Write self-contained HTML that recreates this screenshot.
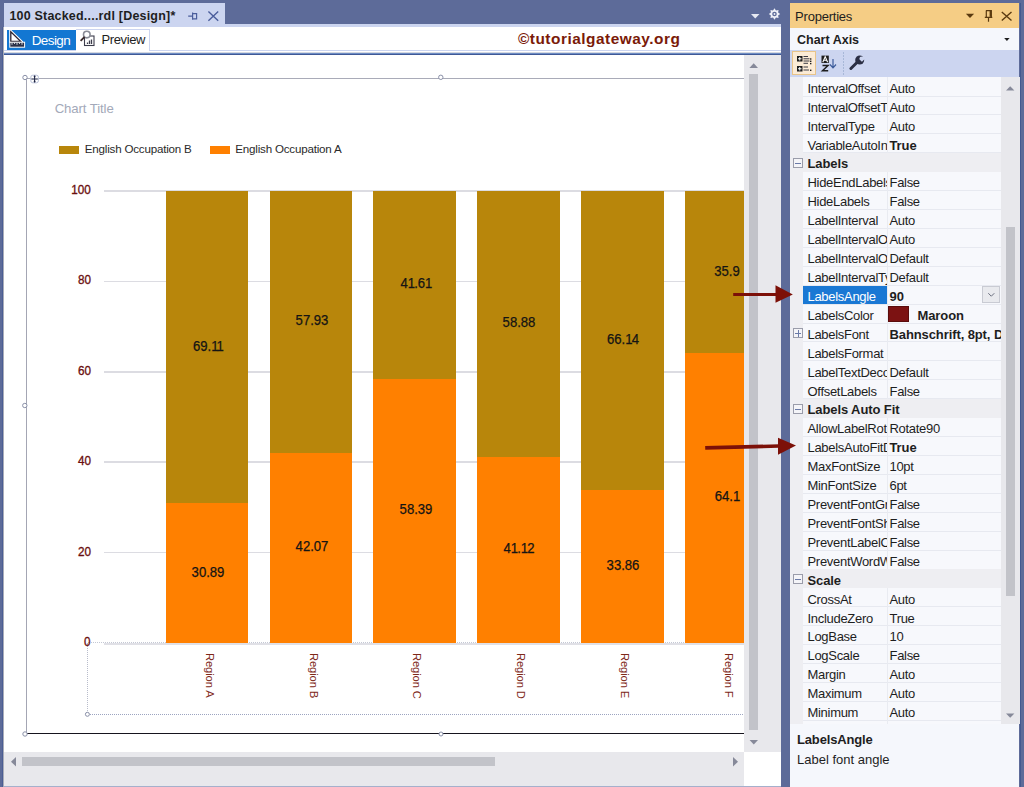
<!DOCTYPE html>
<html><head><meta charset="utf-8">
<style>
html,body{margin:0;padding:0;}
body{width:1024px;height:787px;overflow:hidden;background:#5d6b99;position:relative;font-family:"Liberation Sans",sans-serif;}
.a{position:absolute;}
.t{position:absolute;white-space:nowrap;line-height:0;}
svg{position:absolute;overflow:visible;}
</style></head><body>

<div class="a" style="left:4px;top:3px;width:221px;height:24px;background:#ccd5f0;"></div>
<div class="t" style="left:9.4px;top:15.97px;font-size:12.5px;color:#1e1e1e;font-weight:700;letter-spacing:0.2px;">100 Stacked....rdl [Design]*</div>
<svg style="left:0;top:0" width="1" height="1"><g fill="none" stroke="#4b5e9c" stroke-width="1.2"><path d="M188.2 16.2H192.5M192.6 12.6V19.7M192.6 13.6H196.6V18.8H192.6"/><path d="M208.4 11.6L218.2 20.8M218.2 11.6L208.4 20.8" stroke-width="1.4"/></g></svg>
<div class="a" style="left:4px;top:24px;width:777px;height:3px;background:#ccd5f0;"></div>
<div class="a" style="left:4px;top:27px;width:777px;height:23px;background:#ffffff;"></div>
<div class="a" style="left:4px;top:50px;width:777px;height:1px;background:#ccd5f0;"></div>
<div class="a" style="left:4px;top:51px;width:777px;height:1px;background:#ffffff;"></div>
<div class="a" style="left:4px;top:52px;width:777px;height:1px;background:#d5d8e0;"></div>
<div class="a" style="left:4px;top:53px;width:777px;height:1px;background:#6d8cc4;"></div>
<div class="a" style="left:4px;top:54px;width:777px;height:1px;background:#3f5996;"></div>
<svg style="left:0;top:0" width="1" height="1"><path d="M751 14H759.5L755.25 18.5Z" fill="#e6e9f3"/><path d="M774.50 8.30L775.99 10.40L778.53 9.97L778.10 12.51L780.20 14.00L778.10 15.49L778.53 18.03L775.99 17.60L774.50 19.70L773.01 17.60L770.47 18.03L770.90 15.49L768.80 14.00L770.90 12.51L770.47 9.97L773.01 10.40Z" fill="#eef0f8"/><circle cx="774.5" cy="14" r="2.3" fill="#5d6b99"/><circle cx="774.5" cy="14" r="0.9" fill="#eef0f8"/></svg>
<div class="a" style="left:6.5px;top:29.7px;width:69.6px;height:20.5px;background:#1377d2;"></div>
<svg style="left:0;top:0" width="1" height="1"><path d="M10.3 30.6V41.9H21.9Z" fill="#ffffff" stroke="#ffffff" stroke-width="2.2" stroke-linejoin="round"/><path d="M10.8 31.8V41.4H20.6Z" fill="#ffffff" stroke="#2a2230" stroke-width="1.3" stroke-linejoin="miter"/><rect x="9.8" y="42.2" width="14.8" height="5" fill="#2a3048" stroke="#fff" stroke-width="1"/><path d="M12 42.7V44.8M14.5 42.7V44M17 42.7V44.8M19.5 42.7V44M22 42.7V44.8" stroke="#fff" stroke-width="0.8"/></svg>
<div class="t" style="left:31.7px;top:40.52px;font-size:13.5px;color:#ffffff;font-weight:400;letter-spacing:-0.6px;">Design</div>
<div class="a" style="left:76px;top:29px;width:74px;height:22px;border:1px solid #ccd5f0;border-left:none;border-bottom:none;box-sizing:border-box;background:#fff"></div>
<svg style="left:0;top:0" width="1" height="1"><rect x="84.5" y="36" width="9.5" height="9.5" fill="#fff" stroke="#3c3c4c" stroke-width="1.1"/><path d="M87.5 44V42.5M89.5 44V40.5M91.5 44V39.5" stroke="#3c3c4c" stroke-width="1.3"/><circle cx="86.8" cy="34.6" r="3.3" fill="#fff" stroke="#8a8c96" stroke-width="1.6"/><path d="M84.6 36.9L80.6 40.9" stroke="#3a2a2a" stroke-width="1.8"/></svg>
<div class="t" style="left:101.4px;top:40.29px;font-size:13px;color:#1e1e1e;font-weight:400;letter-spacing:-0.37px;">Preview</div>
<div class="t" style="left:517.9px;top:38.56px;font-size:15.4px;color:#7a1a08;font-weight:700;letter-spacing:0.52px;">&copy;tutorialgateway.org</div>
<div class="a" style="left:4px;top:55px;width:740px;height:697px;background:#fff;overflow:hidden"><div class="a" style="left:-4px;top:-55px;width:1024px;height:787px">
<div class="a" style="left:26px;top:78px;width:740px;height:1px;background:#a9abb8;"></div>
<div class="a" style="left:25.8px;top:78px;width:1.5px;height:656px;background:#a4a6b4;"></div>
<div class="a" style="left:26px;top:732.7px;width:740px;height:1.5px;background:#16141e;"></div>
<div class="t" style="left:54.7px;top:108.82px;font-size:13.2px;color:#a3a9b9;font-weight:400;letter-spacing:-0.1px;">Chart Title</div>
<div class="a" style="left:59px;top:146px;width:20px;height:8px;background:#b8860b;"></div>
<div class="t" style="left:84.8px;top:148.78px;font-size:11.6px;color:#2a2a2a;font-weight:400;letter-spacing:-0.2px;">English Occupation B</div>
<div class="a" style="left:210px;top:146px;width:20px;height:8px;background:#ff8000;"></div>
<div class="t" style="left:235.3px;top:148.78px;font-size:11.6px;color:#2a2a2a;font-weight:400;letter-spacing:-0.2px;">English Occupation A</div>
<div class="a" style="left:104px;top:190.3px;width:640px;height:1.5px;background:#dcdce2;"></div>
<div class="t" style="right:933px;top:190.08px;font-size:13.6px;color:#6a0e0e;font-weight:400;transform:scaleX(0.86);transform-origin:right center;-webkit-text-stroke:0.35px #6a0e0e;">100</div>
<div class="a" style="left:104px;top:280.68px;width:640px;height:1.5px;background:#dcdce2;"></div>
<div class="t" style="right:933px;top:280.46px;font-size:13.6px;color:#6a0e0e;font-weight:400;transform:scaleX(0.86);transform-origin:right center;-webkit-text-stroke:0.35px #6a0e0e;">80</div>
<div class="a" style="left:104px;top:371.06px;width:640px;height:1.5px;background:#dcdce2;"></div>
<div class="t" style="right:933px;top:370.84px;font-size:13.6px;color:#6a0e0e;font-weight:400;transform:scaleX(0.86);transform-origin:right center;-webkit-text-stroke:0.35px #6a0e0e;">60</div>
<div class="a" style="left:104px;top:461.44px;width:640px;height:1.5px;background:#dcdce2;"></div>
<div class="t" style="right:933px;top:461.22px;font-size:13.6px;color:#6a0e0e;font-weight:400;transform:scaleX(0.86);transform-origin:right center;-webkit-text-stroke:0.35px #6a0e0e;">40</div>
<div class="a" style="left:104px;top:551.82px;width:640px;height:1.5px;background:#dcdce2;"></div>
<div class="t" style="right:933px;top:551.60px;font-size:13.6px;color:#6a0e0e;font-weight:400;transform:scaleX(0.86);transform-origin:right center;-webkit-text-stroke:0.35px #6a0e0e;">20</div>
<div class="a" style="left:104px;top:643.0px;width:640px;height:1.5px;background:#e0e0e6;"></div>
<div class="a" style="left:88px;top:641.70px;width:656px;height:0;border-top:1px dotted #c4c8d4"></div>
<div class="a" style="left:87px;top:643px;width:660px;height:72px;border-left:1px dotted #b8bccb;border-bottom:1px dotted #9ca4c0;box-sizing:border-box"></div>
<div class="a" style="left:165.8px;top:190.8px;width:82.5px;height:312.31px;background:#b8860b;"></div>
<div class="a" style="left:165.8px;top:503.11px;width:82.5px;height:139.59px;background:#ff8000;"></div>
<div class="t" style="left:8.0px;width:400px;text-align:center;top:346.57px;font-size:13.8px;color:#141414;font-weight:400;transform:scaleX(0.95);-webkit-text-stroke:0.25px #141414;">69.<span style="letter-spacing:-0.9px">1</span><span style="letter-spacing:-0.9px">1</span></div>
<div class="t" style="left:8.0px;width:400px;text-align:center;top:572.52px;font-size:13.8px;color:#141414;font-weight:400;transform:scaleX(0.95);-webkit-text-stroke:0.25px #141414;">30.89</div>
<div class="a" style="left:201.80px;top:653px;width:16px;height:60px;writing-mode:vertical-rl;font-size:11.2px;line-height:16px;color:#7e2818;white-space:nowrap;letter-spacing:-0.1px">Region A</div>
<div class="a" style="left:269.6px;top:190.8px;width:82.5px;height:261.79px;background:#b8860b;"></div>
<div class="a" style="left:269.6px;top:452.59px;width:82.5px;height:190.11px;background:#ff8000;"></div>
<div class="t" style="left:111.80000000000001px;width:400px;text-align:center;top:321.31px;font-size:13.8px;color:#141414;font-weight:400;transform:scaleX(0.95);-webkit-text-stroke:0.25px #141414;">57.93</div>
<div class="t" style="left:111.80000000000001px;width:400px;text-align:center;top:547.26px;font-size:13.8px;color:#141414;font-weight:400;transform:scaleX(0.95);-webkit-text-stroke:0.25px #141414;">42.07</div>
<div class="a" style="left:305.60px;top:653px;width:16px;height:60px;writing-mode:vertical-rl;font-size:11.2px;line-height:16px;color:#7e2818;white-space:nowrap;letter-spacing:-0.1px">Region B</div>
<div class="a" style="left:373.4px;top:190.8px;width:82.5px;height:188.04px;background:#b8860b;"></div>
<div class="a" style="left:373.4px;top:378.84px;width:82.5px;height:263.86px;background:#ff8000;"></div>
<div class="t" style="left:215.59999999999997px;width:400px;text-align:center;top:284.43px;font-size:13.8px;color:#141414;font-weight:400;transform:scaleX(0.95);-webkit-text-stroke:0.25px #141414;">4<span style="letter-spacing:-0.9px">1</span>.6<span style="letter-spacing:-0.9px">1</span></div>
<div class="t" style="left:215.59999999999997px;width:400px;text-align:center;top:510.38px;font-size:13.8px;color:#141414;font-weight:400;transform:scaleX(0.95);-webkit-text-stroke:0.25px #141414;">58.39</div>
<div class="a" style="left:409.40px;top:653px;width:16px;height:60px;writing-mode:vertical-rl;font-size:11.2px;line-height:16px;color:#7e2818;white-space:nowrap;letter-spacing:-0.1px">Region C</div>
<div class="a" style="left:477.2px;top:190.8px;width:82.5px;height:266.08px;background:#b8860b;"></div>
<div class="a" style="left:477.2px;top:456.88px;width:82.5px;height:185.82px;background:#ff8000;"></div>
<div class="t" style="left:319.4px;width:400px;text-align:center;top:323.45px;font-size:13.8px;color:#141414;font-weight:400;transform:scaleX(0.95);-webkit-text-stroke:0.25px #141414;">58.88</div>
<div class="t" style="left:319.4px;width:400px;text-align:center;top:549.40px;font-size:13.8px;color:#141414;font-weight:400;transform:scaleX(0.95);-webkit-text-stroke:0.25px #141414;">4<span style="letter-spacing:-0.9px">1</span>.<span style="letter-spacing:-0.9px">1</span>2</div>
<div class="a" style="left:513.20px;top:653px;width:16px;height:60px;writing-mode:vertical-rl;font-size:11.2px;line-height:16px;color:#7e2818;white-space:nowrap;letter-spacing:-0.1px">Region D</div>
<div class="a" style="left:581.0px;top:190.8px;width:82.5px;height:298.89px;background:#b8860b;"></div>
<div class="a" style="left:581.0px;top:489.69px;width:82.5px;height:153.01px;background:#ff8000;"></div>
<div class="t" style="left:423.20000000000005px;width:400px;text-align:center;top:339.86px;font-size:13.8px;color:#141414;font-weight:400;transform:scaleX(0.95);-webkit-text-stroke:0.25px #141414;">66.<span style="letter-spacing:-0.9px">1</span>4</div>
<div class="t" style="left:423.20000000000005px;width:400px;text-align:center;top:565.81px;font-size:13.8px;color:#141414;font-weight:400;transform:scaleX(0.95);-webkit-text-stroke:0.25px #141414;">33.86</div>
<div class="a" style="left:617.00px;top:653px;width:16px;height:60px;writing-mode:vertical-rl;font-size:11.2px;line-height:16px;color:#7e2818;white-space:nowrap;letter-spacing:-0.1px">Region E</div>
<div class="a" style="left:684.8px;top:190.8px;width:82.5px;height:162.23px;background:#b8860b;"></div>
<div class="a" style="left:684.8px;top:353.03px;width:82.5px;height:289.67px;background:#ff8000;"></div>
<div class="t" style="left:527.0px;width:400px;text-align:center;top:271.53px;font-size:13.8px;color:#141414;font-weight:400;transform:scaleX(0.95);-webkit-text-stroke:0.25px #141414;">35.9</div>
<div class="t" style="left:527.0px;width:400px;text-align:center;top:497.48px;font-size:13.8px;color:#141414;font-weight:400;transform:scaleX(0.95);-webkit-text-stroke:0.25px #141414;">64.<span style="letter-spacing:-0.9px">1</span></div>
<div class="a" style="left:720.80px;top:653px;width:16px;height:60px;writing-mode:vertical-rl;font-size:11.2px;line-height:16px;color:#7e2818;white-space:nowrap;letter-spacing:-0.1px">Region F</div>
<div class="t" style="right:933px;top:641.98px;font-size:13.6px;color:#6a0e0e;font-weight:400;transform:scaleX(0.86);transform-origin:right center;-webkit-text-stroke:0.35px #6a0e0e;">0</div>
<svg style="left:0;top:0" width="1" height="1"><g fill="#fff" stroke="#8a90a8" stroke-width="1"><circle cx="25" cy="77.5" r="2.2"/><circle cx="440.8" cy="77.3" r="2.2"/><circle cx="24.8" cy="405.5" r="2.2"/><circle cx="25" cy="734" r="2.2"/><circle cx="441" cy="734" r="2"/><circle cx="87.4" cy="714.3" r="2"/></g><rect x="30.8" y="75.2" width="7.6" height="7.6" rx="2" fill="#fff" stroke="#b8c0d8" stroke-width="1"/><path d="M34.6 75.8V82.2M31.4 79H37.8" stroke="#1a2040" stroke-width="1"/><circle cx="34.6" cy="76.5" r="0.9" fill="#1a2040"/><circle cx="34.6" cy="81.5" r="0.9" fill="#1a2040"/></svg>
</div></div>
<div class="a" style="left:744px;top:55px;width:37px;height:697px;background:#e8e8ec;"></div>
<div class="a" style="left:749.2px;top:74.3px;width:8.8px;height:655.5px;background:#c2c3c9;"></div>
<div class="a" style="left:4px;top:752px;width:740px;height:33.5px;background:#e8e8ec;"></div>
<div class="a" style="left:22px;top:757px;width:472.8px;height:8.8px;background:#c2c3c9;"></div>
<div class="a" style="left:744px;top:752px;width:37px;height:33.5px;background:#ffffff;"></div>
<div class="a" style="left:4px;top:785.5px;width:777px;height:1.5px;background:#a5b0cc;"></div>
<svg style="left:0;top:0" width="1" height="1"><path d="M749.4 68H758L753.7 63.2Z" fill="#868999"/><path d="M749.6 740H758L753.8 744.6Z" fill="#868999"/><path d="M16 757V766.5L11 761.75Z" fill="#868999"/><path d="M733 757V766.5L738 761.75Z" fill="#868999"/></svg>
<div class="a" style="left:790px;top:3px;width:229px;height:24.7px;background:#f5cd85;"></div>
<div class="t" style="left:795.1px;top:17.29px;font-size:13px;color:#1e1e1e;font-weight:400;letter-spacing:-0.22px;">Properties</div>
<svg style="left:0;top:0" width="1" height="1"><path d="M965.9 13.8H974.1L970 18Z" fill="#5a3a10"/><g fill="none" stroke="#5a3a10" stroke-width="1.2"><path d="M986 10.6H991.3V17M986.3 10.6V17"/><path d="M990.6 10.6V16.8" stroke-width="2"/><path d="M984.8 17.3H992.3M988.5 17.3V21.7"/><path d="M1001.8 12L1011.5 20.6M1011.5 12L1001.8 20.6" stroke-width="1.4"/></g></svg>
<div class="a" style="left:790px;top:27.7px;width:229px;height:22.3px;background:#f5f7fc;"></div>
<div class="t" style="left:797px;top:40.07px;font-size:12.5px;color:#1e1e1e;font-weight:700;">Chart Axis</div>
<svg style="left:0;top:0" width="1" height="1"><path d="M1004.2 38H1009.6L1006.9 41Z" fill="#1e1e1e"/></svg>
<div class="a" style="left:790px;top:50px;width:229px;height:27px;background:#ccd5f0;"></div>
<div class="a" style="left:792px;top:51.3px;width:24.2px;height:23.5px;background:#fbebd6;border:1px solid #e8c48a;box-sizing:border-box;"></div>
<svg style="left:0;top:0" width="1" height="1"><g fill="#1e1e1e"><rect x="797" y="56" width="5.5" height="5.5"/><rect x="797" y="66" width="5.5" height="5.5"/></g><g stroke="#fff" stroke-width="1"><path d="M799.75 57V60.5M798 58.75H801.5M799.75 67V70.5M798 68.75H801.5"/></g><g stroke="#3a3a44" stroke-width="1"><path d="M803.5 56.5H808M803.5 58.8H809.5M803.5 61H809.5M803.5 63.3H808M803.5 67H808M803.5 70H809"/></g><g fill="#1e1e1e"><rect x="810" y="58.3" width="1.4" height="1.4"/><rect x="810" y="60.6" width="1.4" height="1.4"/><rect x="810" y="62.9" width="1.4" height="1.4"/><rect x="810" y="69.6" width="1.4" height="1.4"/></g><rect x="821.5" y="55.6" width="7.3" height="7.4" fill="#1e1e1e"/><path d="M822.8 62.2L825.2 56.6L827.6 62.2M823.7 60.3H826.7" stroke="#fff" stroke-width="1.1" fill="none"/><path d="M822.5 65.5H828L822.5 70.8H828.2" stroke="#1e1e1e" stroke-width="1.5" fill="none"/><path d="M833 59V67.5M830 64.5L833 67.8L836 64.5" stroke="#3b5b9b" stroke-width="1.2" fill="none"/><path d="M843.5 52V76" stroke="#a8b8d8" stroke-width="1" stroke-dasharray="2 1"/><path d="M850.9 68.5L857.2 62.3" stroke="#2b2f44" stroke-width="3" stroke-linecap="round"/><circle cx="859.7" cy="60" r="4.5" fill="#2b2f44"/><path d="M859.6 59.6L863.2 56L865.5 58.2L861.9 61.8Z" fill="#ccd5f0"/><circle cx="861.4" cy="58.4" r="1.9" fill="#ccd5f0"/></svg>
<div class="a" style="left:790px;top:77px;width:211px;height:647px;background:#eeeef2;overflow:hidden"><div class="a" style="left:-790px;top:-77px;width:1024px;height:787px">
<div class="a" style="left:803px;top:77px;width:198px;height:647px;background:#f7f8fc;"></div>
<div class="a" style="left:803px;top:96px;width:198px;height:1px;background:#e7e9f0;"></div>
<div class="a" style="left:887px;top:77.3px;width:1px;height:18.92px;background:#e9ebf1;"></div>
<div class="a" style="left:803px;top:77.30px;width:84px;height:18.92px;overflow:hidden"><div class="t" style="left:4.5px;top:11.49px;font-size:13px;color:#1e1e1e;letter-spacing:-0.3px">IntervalOffset</div></div>
<div class="a" style="left:888px;top:77.30px;width:113px;height:18.92px;overflow:hidden"><div class="t" style="left:1.5px;top:11.49px;font-size:13px;color:#1e1e1e;font-weight:400;letter-spacing:-0.3px">Auto</div></div>
<div class="a" style="left:803px;top:114px;width:198px;height:1px;background:#e7e9f0;"></div>
<div class="a" style="left:887px;top:96.22px;width:1px;height:18.92px;background:#e9ebf1;"></div>
<div class="a" style="left:803px;top:96.22px;width:84px;height:18.92px;overflow:hidden"><div class="t" style="left:4.5px;top:11.49px;font-size:13px;color:#1e1e1e;letter-spacing:-0.3px">IntervalOffsetType</div></div>
<div class="a" style="left:888px;top:96.22px;width:113px;height:18.92px;overflow:hidden"><div class="t" style="left:1.5px;top:11.49px;font-size:13px;color:#1e1e1e;font-weight:400;letter-spacing:-0.3px">Auto</div></div>
<div class="a" style="left:803px;top:133px;width:198px;height:1px;background:#e7e9f0;"></div>
<div class="a" style="left:887px;top:115.14px;width:1px;height:18.92px;background:#e9ebf1;"></div>
<div class="a" style="left:803px;top:115.14px;width:84px;height:18.92px;overflow:hidden"><div class="t" style="left:4.5px;top:11.49px;font-size:13px;color:#1e1e1e;letter-spacing:-0.3px">IntervalType</div></div>
<div class="a" style="left:888px;top:115.14px;width:113px;height:18.92px;overflow:hidden"><div class="t" style="left:1.5px;top:11.49px;font-size:13px;color:#1e1e1e;font-weight:400;letter-spacing:-0.3px">Auto</div></div>
<div class="a" style="left:803px;top:152px;width:198px;height:1px;background:#e7e9f0;"></div>
<div class="a" style="left:887px;top:134.06px;width:1px;height:18.92px;background:#e9ebf1;"></div>
<div class="a" style="left:803px;top:134.06px;width:84px;height:18.92px;overflow:hidden"><div class="t" style="left:4.5px;top:11.49px;font-size:13px;color:#1e1e1e;letter-spacing:-0.3px">VariableAutoInterval</div></div>
<div class="a" style="left:888px;top:134.06px;width:113px;height:18.92px;overflow:hidden"><div class="t" style="left:1.5px;top:11.49px;font-size:13px;color:#1e1e1e;font-weight:700;letter-spacing:-0.1px">True</div></div>
<div class="a" style="left:803px;top:152.98px;width:198px;height:18.92px;background:#eeeef2;"></div>
<div class="a" style="left:793.2px;top:157.98px;width:9.6px;height:9.8px;border:1px solid #9a9caa;box-sizing:border-box;background:#f4f4f8"></div>
<div class="a" style="left:795px;top:162.88px;width:6px;height:1px;background:#6a7aa8;"></div>
<div class="t" style="left:807.5px;top:164.47px;font-size:13px;color:#1e1e1e;font-weight:700;letter-spacing:-0.1px;">Labels</div>
<div class="a" style="left:803px;top:190px;width:198px;height:1px;background:#e7e9f0;"></div>
<div class="a" style="left:887px;top:171.9px;width:1px;height:18.92px;background:#e9ebf1;"></div>
<div class="a" style="left:803px;top:171.90px;width:84px;height:18.92px;overflow:hidden"><div class="t" style="left:4.5px;top:11.49px;font-size:13px;color:#1e1e1e;letter-spacing:-0.3px">HideEndLabels</div></div>
<div class="a" style="left:888px;top:171.90px;width:113px;height:18.92px;overflow:hidden"><div class="t" style="left:1.5px;top:11.49px;font-size:13px;color:#1e1e1e;font-weight:400;letter-spacing:-0.3px">False</div></div>
<div class="a" style="left:803px;top:209px;width:198px;height:1px;background:#e7e9f0;"></div>
<div class="a" style="left:887px;top:190.82px;width:1px;height:18.92px;background:#e9ebf1;"></div>
<div class="a" style="left:803px;top:190.82px;width:84px;height:18.92px;overflow:hidden"><div class="t" style="left:4.5px;top:11.49px;font-size:13px;color:#1e1e1e;letter-spacing:-0.3px">HideLabels</div></div>
<div class="a" style="left:888px;top:190.82px;width:113px;height:18.92px;overflow:hidden"><div class="t" style="left:1.5px;top:11.49px;font-size:13px;color:#1e1e1e;font-weight:400;letter-spacing:-0.3px">False</div></div>
<div class="a" style="left:803px;top:228px;width:198px;height:1px;background:#e7e9f0;"></div>
<div class="a" style="left:887px;top:209.74px;width:1px;height:18.92px;background:#e9ebf1;"></div>
<div class="a" style="left:803px;top:209.74px;width:84px;height:18.92px;overflow:hidden"><div class="t" style="left:4.5px;top:11.49px;font-size:13px;color:#1e1e1e;letter-spacing:-0.3px">LabelInterval</div></div>
<div class="a" style="left:888px;top:209.74px;width:113px;height:18.92px;overflow:hidden"><div class="t" style="left:1.5px;top:11.49px;font-size:13px;color:#1e1e1e;font-weight:400;letter-spacing:-0.3px">Auto</div></div>
<div class="a" style="left:803px;top:247px;width:198px;height:1px;background:#e7e9f0;"></div>
<div class="a" style="left:887px;top:228.66px;width:1px;height:18.92px;background:#e9ebf1;"></div>
<div class="a" style="left:803px;top:228.66px;width:84px;height:18.92px;overflow:hidden"><div class="t" style="left:4.5px;top:11.49px;font-size:13px;color:#1e1e1e;letter-spacing:-0.3px">LabelIntervalOffset</div></div>
<div class="a" style="left:888px;top:228.66px;width:113px;height:18.92px;overflow:hidden"><div class="t" style="left:1.5px;top:11.49px;font-size:13px;color:#1e1e1e;font-weight:400;letter-spacing:-0.3px">Auto</div></div>
<div class="a" style="left:803px;top:266px;width:198px;height:1px;background:#e7e9f0;"></div>
<div class="a" style="left:887px;top:247.58px;width:1px;height:18.92px;background:#e9ebf1;"></div>
<div class="a" style="left:803px;top:247.58px;width:84px;height:18.92px;overflow:hidden"><div class="t" style="left:4.5px;top:11.49px;font-size:13px;color:#1e1e1e;letter-spacing:-0.3px">LabelIntervalOffsetType</div></div>
<div class="a" style="left:888px;top:247.58px;width:113px;height:18.92px;overflow:hidden"><div class="t" style="left:1.5px;top:11.49px;font-size:13px;color:#1e1e1e;font-weight:400;letter-spacing:-0.3px">Default</div></div>
<div class="a" style="left:803px;top:285px;width:198px;height:1px;background:#e7e9f0;"></div>
<div class="a" style="left:887px;top:266.5px;width:1px;height:18.92px;background:#e9ebf1;"></div>
<div class="a" style="left:803px;top:266.50px;width:84px;height:18.92px;overflow:hidden"><div class="t" style="left:4.5px;top:11.49px;font-size:13px;color:#1e1e1e;letter-spacing:-0.3px">LabelIntervalType</div></div>
<div class="a" style="left:888px;top:266.50px;width:113px;height:18.92px;overflow:hidden"><div class="t" style="left:1.5px;top:11.49px;font-size:13px;color:#1e1e1e;font-weight:400;letter-spacing:-0.3px">Default</div></div>
<div class="a" style="left:803px;top:304px;width:198px;height:1px;background:#e7e9f0;"></div>
<div class="a" style="left:887px;top:285.42px;width:1px;height:18.92px;background:#e9ebf1;"></div>
<div class="a" style="left:803px;top:286.32px;width:84px;height:17.6px;background:#1a78d4;"></div>
<div class="a" style="left:803px;top:285.42px;width:84px;height:18.92px;overflow:hidden"><div class="t" style="left:4.5px;top:11.49px;font-size:13px;color:#ffffff;letter-spacing:-0.3px">LabelsAngle</div></div>
<div class="a" style="left:888px;top:285.42px;width:113px;height:18.92px;overflow:hidden"><div class="t" style="left:1.5px;top:11.49px;font-size:13px;color:#1e1e1e;font-weight:700;letter-spacing:-0.1px">90</div></div>
<div class="a" style="left:982.4px;top:286.02px;width:17.8px;height:17.1px;background:#e9eaee;border:1px solid #c9cbd3;box-sizing:border-box;"></div>
<svg style="left:0;top:0" width="1" height="1"><path d="M988.3 293.22L991.3 296.22L994.3 293.22" fill="none" stroke="#6a6e7e" stroke-width="1"/></svg>
<div class="a" style="left:803px;top:323px;width:198px;height:1px;background:#e7e9f0;"></div>
<div class="a" style="left:887px;top:304.34px;width:1px;height:18.92px;background:#e9ebf1;"></div>
<div class="a" style="left:803px;top:304.34px;width:84px;height:18.92px;overflow:hidden"><div class="t" style="left:4.5px;top:11.49px;font-size:13px;color:#1e1e1e;letter-spacing:-0.3px">LabelsColor</div></div>
<div class="a" style="left:888.3px;top:305.74px;width:20.5px;height:16.6px;background:#7c1212;border:1px solid #5a0c0c;box-sizing:border-box;"></div>
<div class="t" style="left:917.5px;top:315.83px;font-size:13px;color:#1e1e1e;font-weight:700;letter-spacing:-0.1px;">Maroon</div>
<div class="a" style="left:803px;top:341px;width:198px;height:1px;background:#e7e9f0;"></div>
<div class="a" style="left:887px;top:323.26px;width:1px;height:18.92px;background:#e9ebf1;"></div>
<div class="a" style="left:803px;top:323.26px;width:84px;height:18.92px;overflow:hidden"><div class="t" style="left:4.5px;top:11.49px;font-size:13px;color:#1e1e1e;letter-spacing:-0.3px">LabelsFont</div></div>
<div class="a" style="left:888px;top:323.26px;width:113px;height:18.92px;overflow:hidden"><div class="t" style="left:1.5px;top:11.49px;font-size:13px;color:#1e1e1e;font-weight:700;letter-spacing:-0.1px">Bahnschrift, 8pt, Default</div></div>
<div class="a" style="left:793.2px;top:328.26px;width:9.6px;height:9.8px;border:1px solid #9a9caa;box-sizing:border-box;background:#f4f4f8"></div>
<div class="a" style="left:795px;top:333.16px;width:6px;height:1px;background:#6a7aa8;"></div>
<div class="a" style="left:797.5px;top:329.76px;width:1px;height:6.8px;background:#6a7aa8;"></div>
<div class="a" style="left:803px;top:360px;width:198px;height:1px;background:#e7e9f0;"></div>
<div class="a" style="left:887px;top:342.18px;width:1px;height:18.92px;background:#e9ebf1;"></div>
<div class="a" style="left:803px;top:342.18px;width:84px;height:18.92px;overflow:hidden"><div class="t" style="left:4.5px;top:11.49px;font-size:13px;color:#1e1e1e;letter-spacing:-0.3px">LabelsFormat</div></div>
<div class="a" style="left:803px;top:379px;width:198px;height:1px;background:#e7e9f0;"></div>
<div class="a" style="left:887px;top:361.1px;width:1px;height:18.92px;background:#e9ebf1;"></div>
<div class="a" style="left:803px;top:361.10px;width:84px;height:18.92px;overflow:hidden"><div class="t" style="left:4.5px;top:11.49px;font-size:13px;color:#1e1e1e;letter-spacing:-0.3px">LabelTextDecoration</div></div>
<div class="a" style="left:888px;top:361.10px;width:113px;height:18.92px;overflow:hidden"><div class="t" style="left:1.5px;top:11.49px;font-size:13px;color:#1e1e1e;font-weight:400;letter-spacing:-0.3px">Default</div></div>
<div class="a" style="left:803px;top:398px;width:198px;height:1px;background:#e7e9f0;"></div>
<div class="a" style="left:887px;top:380.02px;width:1px;height:18.92px;background:#e9ebf1;"></div>
<div class="a" style="left:803px;top:380.02px;width:84px;height:18.92px;overflow:hidden"><div class="t" style="left:4.5px;top:11.49px;font-size:13px;color:#1e1e1e;letter-spacing:-0.3px">OffsetLabels</div></div>
<div class="a" style="left:888px;top:380.02px;width:113px;height:18.92px;overflow:hidden"><div class="t" style="left:1.5px;top:11.49px;font-size:13px;color:#1e1e1e;font-weight:400;letter-spacing:-0.3px">False</div></div>
<div class="a" style="left:803px;top:398.94px;width:198px;height:18.92px;background:#eeeef2;"></div>
<div class="a" style="left:793.2px;top:403.94px;width:9.6px;height:9.8px;border:1px solid #9a9caa;box-sizing:border-box;background:#f4f4f8"></div>
<div class="a" style="left:795px;top:408.84px;width:6px;height:1px;background:#6a7aa8;"></div>
<div class="t" style="left:807.5px;top:410.43px;font-size:13px;color:#1e1e1e;font-weight:700;letter-spacing:-0.1px;">Labels Auto Fit</div>
<div class="a" style="left:803px;top:436px;width:198px;height:1px;background:#e7e9f0;"></div>
<div class="a" style="left:887px;top:417.86px;width:1px;height:18.92px;background:#e9ebf1;"></div>
<div class="a" style="left:803px;top:417.86px;width:84px;height:18.92px;overflow:hidden"><div class="t" style="left:4.5px;top:11.49px;font-size:13px;color:#1e1e1e;letter-spacing:-0.3px">AllowLabelRotation</div></div>
<div class="a" style="left:888px;top:417.86px;width:113px;height:18.92px;overflow:hidden"><div class="t" style="left:1.5px;top:11.49px;font-size:13px;color:#1e1e1e;font-weight:400;letter-spacing:-0.3px">Rotate90</div></div>
<div class="a" style="left:803px;top:455px;width:198px;height:1px;background:#e7e9f0;"></div>
<div class="a" style="left:887px;top:436.78px;width:1px;height:18.92px;background:#e9ebf1;"></div>
<div class="a" style="left:803px;top:436.78px;width:84px;height:18.92px;overflow:hidden"><div class="t" style="left:4.5px;top:11.49px;font-size:13px;color:#1e1e1e;letter-spacing:-0.3px">LabelsAutoFitDisabled</div></div>
<div class="a" style="left:888px;top:436.78px;width:113px;height:18.92px;overflow:hidden"><div class="t" style="left:1.5px;top:11.49px;font-size:13px;color:#1e1e1e;font-weight:700;letter-spacing:-0.1px">True</div></div>
<div class="a" style="left:803px;top:474px;width:198px;height:1px;background:#e7e9f0;"></div>
<div class="a" style="left:887px;top:455.7px;width:1px;height:18.92px;background:#e9ebf1;"></div>
<div class="a" style="left:803px;top:455.70px;width:84px;height:18.92px;overflow:hidden"><div class="t" style="left:4.5px;top:11.49px;font-size:13px;color:#1e1e1e;letter-spacing:-0.3px">MaxFontSize</div></div>
<div class="a" style="left:888px;top:455.70px;width:113px;height:18.92px;overflow:hidden"><div class="t" style="left:1.5px;top:11.49px;font-size:13px;color:#1e1e1e;font-weight:400;letter-spacing:-0.3px">10pt</div></div>
<div class="a" style="left:803px;top:493px;width:198px;height:1px;background:#e7e9f0;"></div>
<div class="a" style="left:887px;top:474.62px;width:1px;height:18.92px;background:#e9ebf1;"></div>
<div class="a" style="left:803px;top:474.62px;width:84px;height:18.92px;overflow:hidden"><div class="t" style="left:4.5px;top:11.49px;font-size:13px;color:#1e1e1e;letter-spacing:-0.3px">MinFontSize</div></div>
<div class="a" style="left:888px;top:474.62px;width:113px;height:18.92px;overflow:hidden"><div class="t" style="left:1.5px;top:11.49px;font-size:13px;color:#1e1e1e;font-weight:400;letter-spacing:-0.3px">6pt</div></div>
<div class="a" style="left:803px;top:512px;width:198px;height:1px;background:#e7e9f0;"></div>
<div class="a" style="left:887px;top:493.54px;width:1px;height:18.92px;background:#e9ebf1;"></div>
<div class="a" style="left:803px;top:493.54px;width:84px;height:18.92px;overflow:hidden"><div class="t" style="left:4.5px;top:11.49px;font-size:13px;color:#1e1e1e;letter-spacing:-0.3px">PreventFontGrow</div></div>
<div class="a" style="left:888px;top:493.54px;width:113px;height:18.92px;overflow:hidden"><div class="t" style="left:1.5px;top:11.49px;font-size:13px;color:#1e1e1e;font-weight:400;letter-spacing:-0.3px">False</div></div>
<div class="a" style="left:803px;top:531px;width:198px;height:1px;background:#e7e9f0;"></div>
<div class="a" style="left:887px;top:512.46px;width:1px;height:18.92px;background:#e9ebf1;"></div>
<div class="a" style="left:803px;top:512.46px;width:84px;height:18.92px;overflow:hidden"><div class="t" style="left:4.5px;top:11.49px;font-size:13px;color:#1e1e1e;letter-spacing:-0.3px">PreventFontShrink</div></div>
<div class="a" style="left:888px;top:512.46px;width:113px;height:18.92px;overflow:hidden"><div class="t" style="left:1.5px;top:11.49px;font-size:13px;color:#1e1e1e;font-weight:400;letter-spacing:-0.3px">False</div></div>
<div class="a" style="left:803px;top:550px;width:198px;height:1px;background:#e7e9f0;"></div>
<div class="a" style="left:887px;top:531.38px;width:1px;height:18.92px;background:#e9ebf1;"></div>
<div class="a" style="left:803px;top:531.38px;width:84px;height:18.92px;overflow:hidden"><div class="t" style="left:4.5px;top:11.49px;font-size:13px;color:#1e1e1e;letter-spacing:-0.3px">PreventLabelOffset</div></div>
<div class="a" style="left:888px;top:531.38px;width:113px;height:18.92px;overflow:hidden"><div class="t" style="left:1.5px;top:11.49px;font-size:13px;color:#1e1e1e;font-weight:400;letter-spacing:-0.3px">False</div></div>
<div class="a" style="left:803px;top:569px;width:198px;height:1px;background:#e7e9f0;"></div>
<div class="a" style="left:887px;top:550.3px;width:1px;height:18.92px;background:#e9ebf1;"></div>
<div class="a" style="left:803px;top:550.30px;width:84px;height:18.92px;overflow:hidden"><div class="t" style="left:4.5px;top:11.49px;font-size:13px;color:#1e1e1e;letter-spacing:-0.3px">PreventWordWrap</div></div>
<div class="a" style="left:888px;top:550.30px;width:113px;height:18.92px;overflow:hidden"><div class="t" style="left:1.5px;top:11.49px;font-size:13px;color:#1e1e1e;font-weight:400;letter-spacing:-0.3px">False</div></div>
<div class="a" style="left:803px;top:569.22px;width:198px;height:18.92px;background:#eeeef2;"></div>
<div class="a" style="left:793.2px;top:574.22px;width:9.6px;height:9.8px;border:1px solid #9a9caa;box-sizing:border-box;background:#f4f4f8"></div>
<div class="a" style="left:795px;top:579.12px;width:6px;height:1px;background:#6a7aa8;"></div>
<div class="t" style="left:807.5px;top:580.71px;font-size:13px;color:#1e1e1e;font-weight:700;letter-spacing:-0.1px;">Scale</div>
<div class="a" style="left:803px;top:606px;width:198px;height:1px;background:#e7e9f0;"></div>
<div class="a" style="left:887px;top:588.14px;width:1px;height:18.92px;background:#e9ebf1;"></div>
<div class="a" style="left:803px;top:588.14px;width:84px;height:18.92px;overflow:hidden"><div class="t" style="left:4.5px;top:11.49px;font-size:13px;color:#1e1e1e;letter-spacing:-0.3px">CrossAt</div></div>
<div class="a" style="left:888px;top:588.14px;width:113px;height:18.92px;overflow:hidden"><div class="t" style="left:1.5px;top:11.49px;font-size:13px;color:#1e1e1e;font-weight:400;letter-spacing:-0.3px">Auto</div></div>
<div class="a" style="left:803px;top:625px;width:198px;height:1px;background:#e7e9f0;"></div>
<div class="a" style="left:887px;top:607.06px;width:1px;height:18.92px;background:#e9ebf1;"></div>
<div class="a" style="left:803px;top:607.06px;width:84px;height:18.92px;overflow:hidden"><div class="t" style="left:4.5px;top:11.49px;font-size:13px;color:#1e1e1e;letter-spacing:-0.3px">IncludeZero</div></div>
<div class="a" style="left:888px;top:607.06px;width:113px;height:18.92px;overflow:hidden"><div class="t" style="left:1.5px;top:11.49px;font-size:13px;color:#1e1e1e;font-weight:400;letter-spacing:-0.3px">True</div></div>
<div class="a" style="left:803px;top:644px;width:198px;height:1px;background:#e7e9f0;"></div>
<div class="a" style="left:887px;top:625.98px;width:1px;height:18.92px;background:#e9ebf1;"></div>
<div class="a" style="left:803px;top:625.98px;width:84px;height:18.92px;overflow:hidden"><div class="t" style="left:4.5px;top:11.49px;font-size:13px;color:#1e1e1e;letter-spacing:-0.3px">LogBase</div></div>
<div class="a" style="left:888px;top:625.98px;width:113px;height:18.92px;overflow:hidden"><div class="t" style="left:1.5px;top:11.49px;font-size:13px;color:#1e1e1e;font-weight:400;letter-spacing:-0.3px">10</div></div>
<div class="a" style="left:803px;top:663px;width:198px;height:1px;background:#e7e9f0;"></div>
<div class="a" style="left:887px;top:644.9px;width:1px;height:18.92px;background:#e9ebf1;"></div>
<div class="a" style="left:803px;top:644.90px;width:84px;height:18.92px;overflow:hidden"><div class="t" style="left:4.5px;top:11.49px;font-size:13px;color:#1e1e1e;letter-spacing:-0.3px">LogScale</div></div>
<div class="a" style="left:888px;top:644.90px;width:113px;height:18.92px;overflow:hidden"><div class="t" style="left:1.5px;top:11.49px;font-size:13px;color:#1e1e1e;font-weight:400;letter-spacing:-0.3px">False</div></div>
<div class="a" style="left:803px;top:682px;width:198px;height:1px;background:#e7e9f0;"></div>
<div class="a" style="left:887px;top:663.82px;width:1px;height:18.92px;background:#e9ebf1;"></div>
<div class="a" style="left:803px;top:663.82px;width:84px;height:18.92px;overflow:hidden"><div class="t" style="left:4.5px;top:11.49px;font-size:13px;color:#1e1e1e;letter-spacing:-0.3px">Margin</div></div>
<div class="a" style="left:888px;top:663.82px;width:113px;height:18.92px;overflow:hidden"><div class="t" style="left:1.5px;top:11.49px;font-size:13px;color:#1e1e1e;font-weight:400;letter-spacing:-0.3px">Auto</div></div>
<div class="a" style="left:803px;top:701px;width:198px;height:1px;background:#e7e9f0;"></div>
<div class="a" style="left:887px;top:682.74px;width:1px;height:18.92px;background:#e9ebf1;"></div>
<div class="a" style="left:803px;top:682.74px;width:84px;height:18.92px;overflow:hidden"><div class="t" style="left:4.5px;top:11.49px;font-size:13px;color:#1e1e1e;letter-spacing:-0.3px">Maximum</div></div>
<div class="a" style="left:888px;top:682.74px;width:113px;height:18.92px;overflow:hidden"><div class="t" style="left:1.5px;top:11.49px;font-size:13px;color:#1e1e1e;font-weight:400;letter-spacing:-0.3px">Auto</div></div>
<div class="a" style="left:803px;top:720px;width:198px;height:1px;background:#e7e9f0;"></div>
<div class="a" style="left:887px;top:701.66px;width:1px;height:18.92px;background:#e9ebf1;"></div>
<div class="a" style="left:803px;top:701.66px;width:84px;height:18.92px;overflow:hidden"><div class="t" style="left:4.5px;top:11.49px;font-size:13px;color:#1e1e1e;letter-spacing:-0.3px">Minimum</div></div>
<div class="a" style="left:888px;top:701.66px;width:113px;height:18.92px;overflow:hidden"><div class="t" style="left:1.5px;top:11.49px;font-size:13px;color:#1e1e1e;font-weight:400;letter-spacing:-0.3px">Auto</div></div>
<div class="a" style="left:887px;top:720.58px;width:1px;height:10px;background:#e9ebf1;"></div>
</div></div>
<div class="a" style="left:1001px;top:77px;width:18.5px;height:647px;background:#e8e8ec;"></div>
<div class="a" style="left:1005.9px;top:227px;width:8.9px;height:369.2px;background:#c2c3c9;"></div>
<svg style="left:0;top:0" width="1" height="1"><path d="M1006 90.6H1014.4L1010.2 86.2Z" fill="#868999"/><path d="M1006 713.4H1014.4L1010.2 717.8Z" fill="#868999"/></svg>
<div class="a" style="left:790px;top:724px;width:229px;height:63px;background:#f5f7fc;"></div>
<div class="t" style="left:797px;top:740.09px;font-size:13px;color:#1e1e1e;font-weight:700;letter-spacing:-0.15px;">LabelsAngle</div>
<div class="t" style="left:797px;top:759.69px;font-size:13px;color:#1e1e1e;font-weight:400;">Label font angle</div>
<div class="a" style="left:2px;top:27px;width:1px;height:760px;background:#4b5e94;"></div>
<div class="a" style="left:3px;top:27px;width:1px;height:760px;background:#a9acb8;"></div>
<div class="a" style="left:1020px;top:3px;width:1px;height:784px;background:#44598f;"></div>
<svg style="left:0;top:0" width="1" height="1"><path d="M733.2 294.5H777" stroke="#7c1008" stroke-width="3.2"/><path d="M775.5 285.3L792.8 294.5L775.5 302.8Z" fill="#7c1008"/><path d="M705.2 447.9L779 446" stroke="#7c1008" stroke-width="3.6"/><path d="M778 437.7L796 445.6L778 454.8Z" fill="#7c1008"/></svg>
</body></html>
